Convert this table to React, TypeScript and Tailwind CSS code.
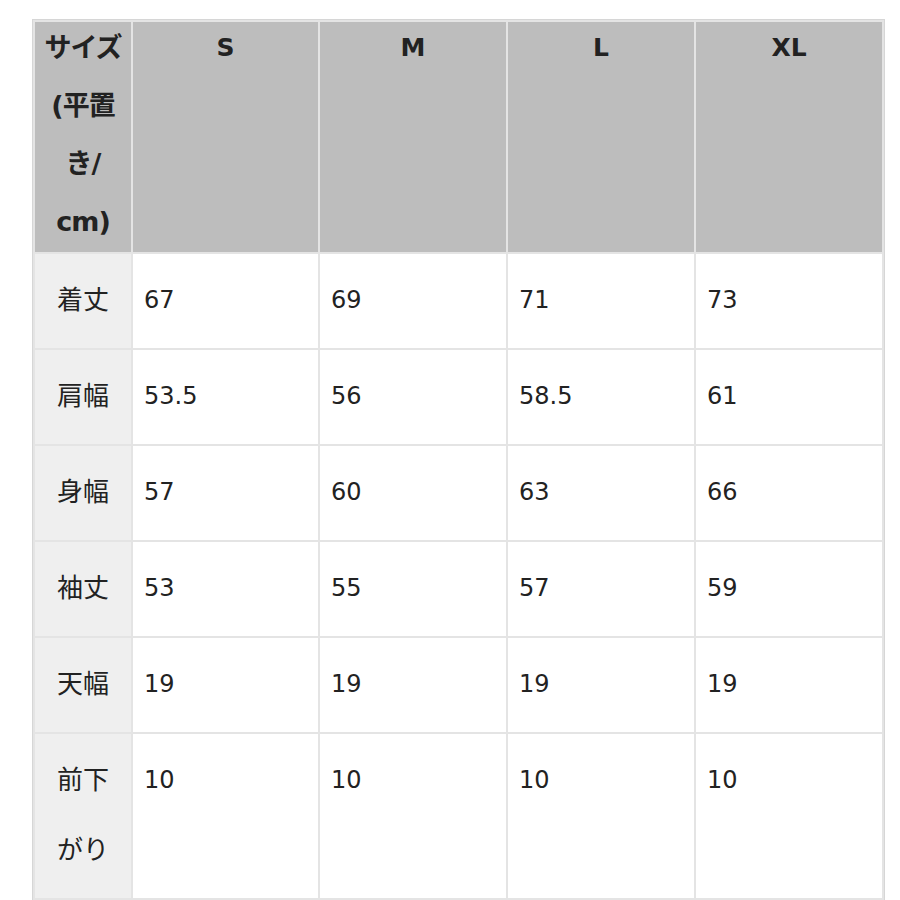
import React from 'react';

const sizes = ['S', 'M', 'L', 'XL'];

const rows: { label: string[]; values: string[] }[] = [
    { label: ['着丈'], values: ['67', '69', '71', '73'] },
    { label: ['肩幅'], values: ['53.5', '56', '58.5', '61'] },
    { label: ['身幅'], values: ['57', '60', '63', '66'] },
    { label: ['袖丈'], values: ['53', '55', '57', '59'] },
    { label: ['天幅'], values: ['19', '19', '19', '19'] },
    { label: ['前下', 'がり'], values: ['10', '10', '10', '10'] },
];

const font = { fontFamily: '"DejaVu Sans", "Noto Sans CJK JP", sans-serif' };

const App: React.FC = () => {
    return (
        <div className="w-[900px] h-[900px] bg-white overflow-hidden text-[#222]" style={font}>
            <div className="ml-[32px] mt-[19px] w-[853px] border border-[#d6d6d6] bg-[#e4e4e4] p-[2px]">
                <div className="grid grid-cols-[96px_185px_186px_186px_186px] grid-rows-[230px_94px_94px_94px_94px_94px_164px] gap-[2px]">
                    {/* header */}
                    <div className="bg-[#bdbdbd] text-center font-bold text-[27px] leading-[58px] overflow-hidden">
                        <div className="-mt-[3px] tracking-[-1px]">
                            サイズ<br />(平置<br />き/<br />cm)
                        </div>
                    </div>
                    {sizes.map(s => (
                        <div key={s} className="bg-[#bdbdbd] text-center font-bold text-[25px] leading-[58px]">
                            <div className="-mt-[3px]">{s}</div>
                        </div>
                    ))}

                    {rows.map(row => (
                        <React.Fragment key={row.label.join('')}>
                            <div className="bg-[#efefef] text-center text-[26px] leading-[70px] py-[11px]">
                                {row.label.map(l => <div key={l}>{l}</div>)}
                            </div>
                            {row.values.map((v, i) => (
                                <div key={i} className="bg-white text-[24px] leading-[70px] py-[11px] pl-[11px]">
                                    {v}
                                </div>
                            ))}
                        </React.Fragment>
                    ))}
                </div>
            </div>
        </div>
    );
};

export default App;
